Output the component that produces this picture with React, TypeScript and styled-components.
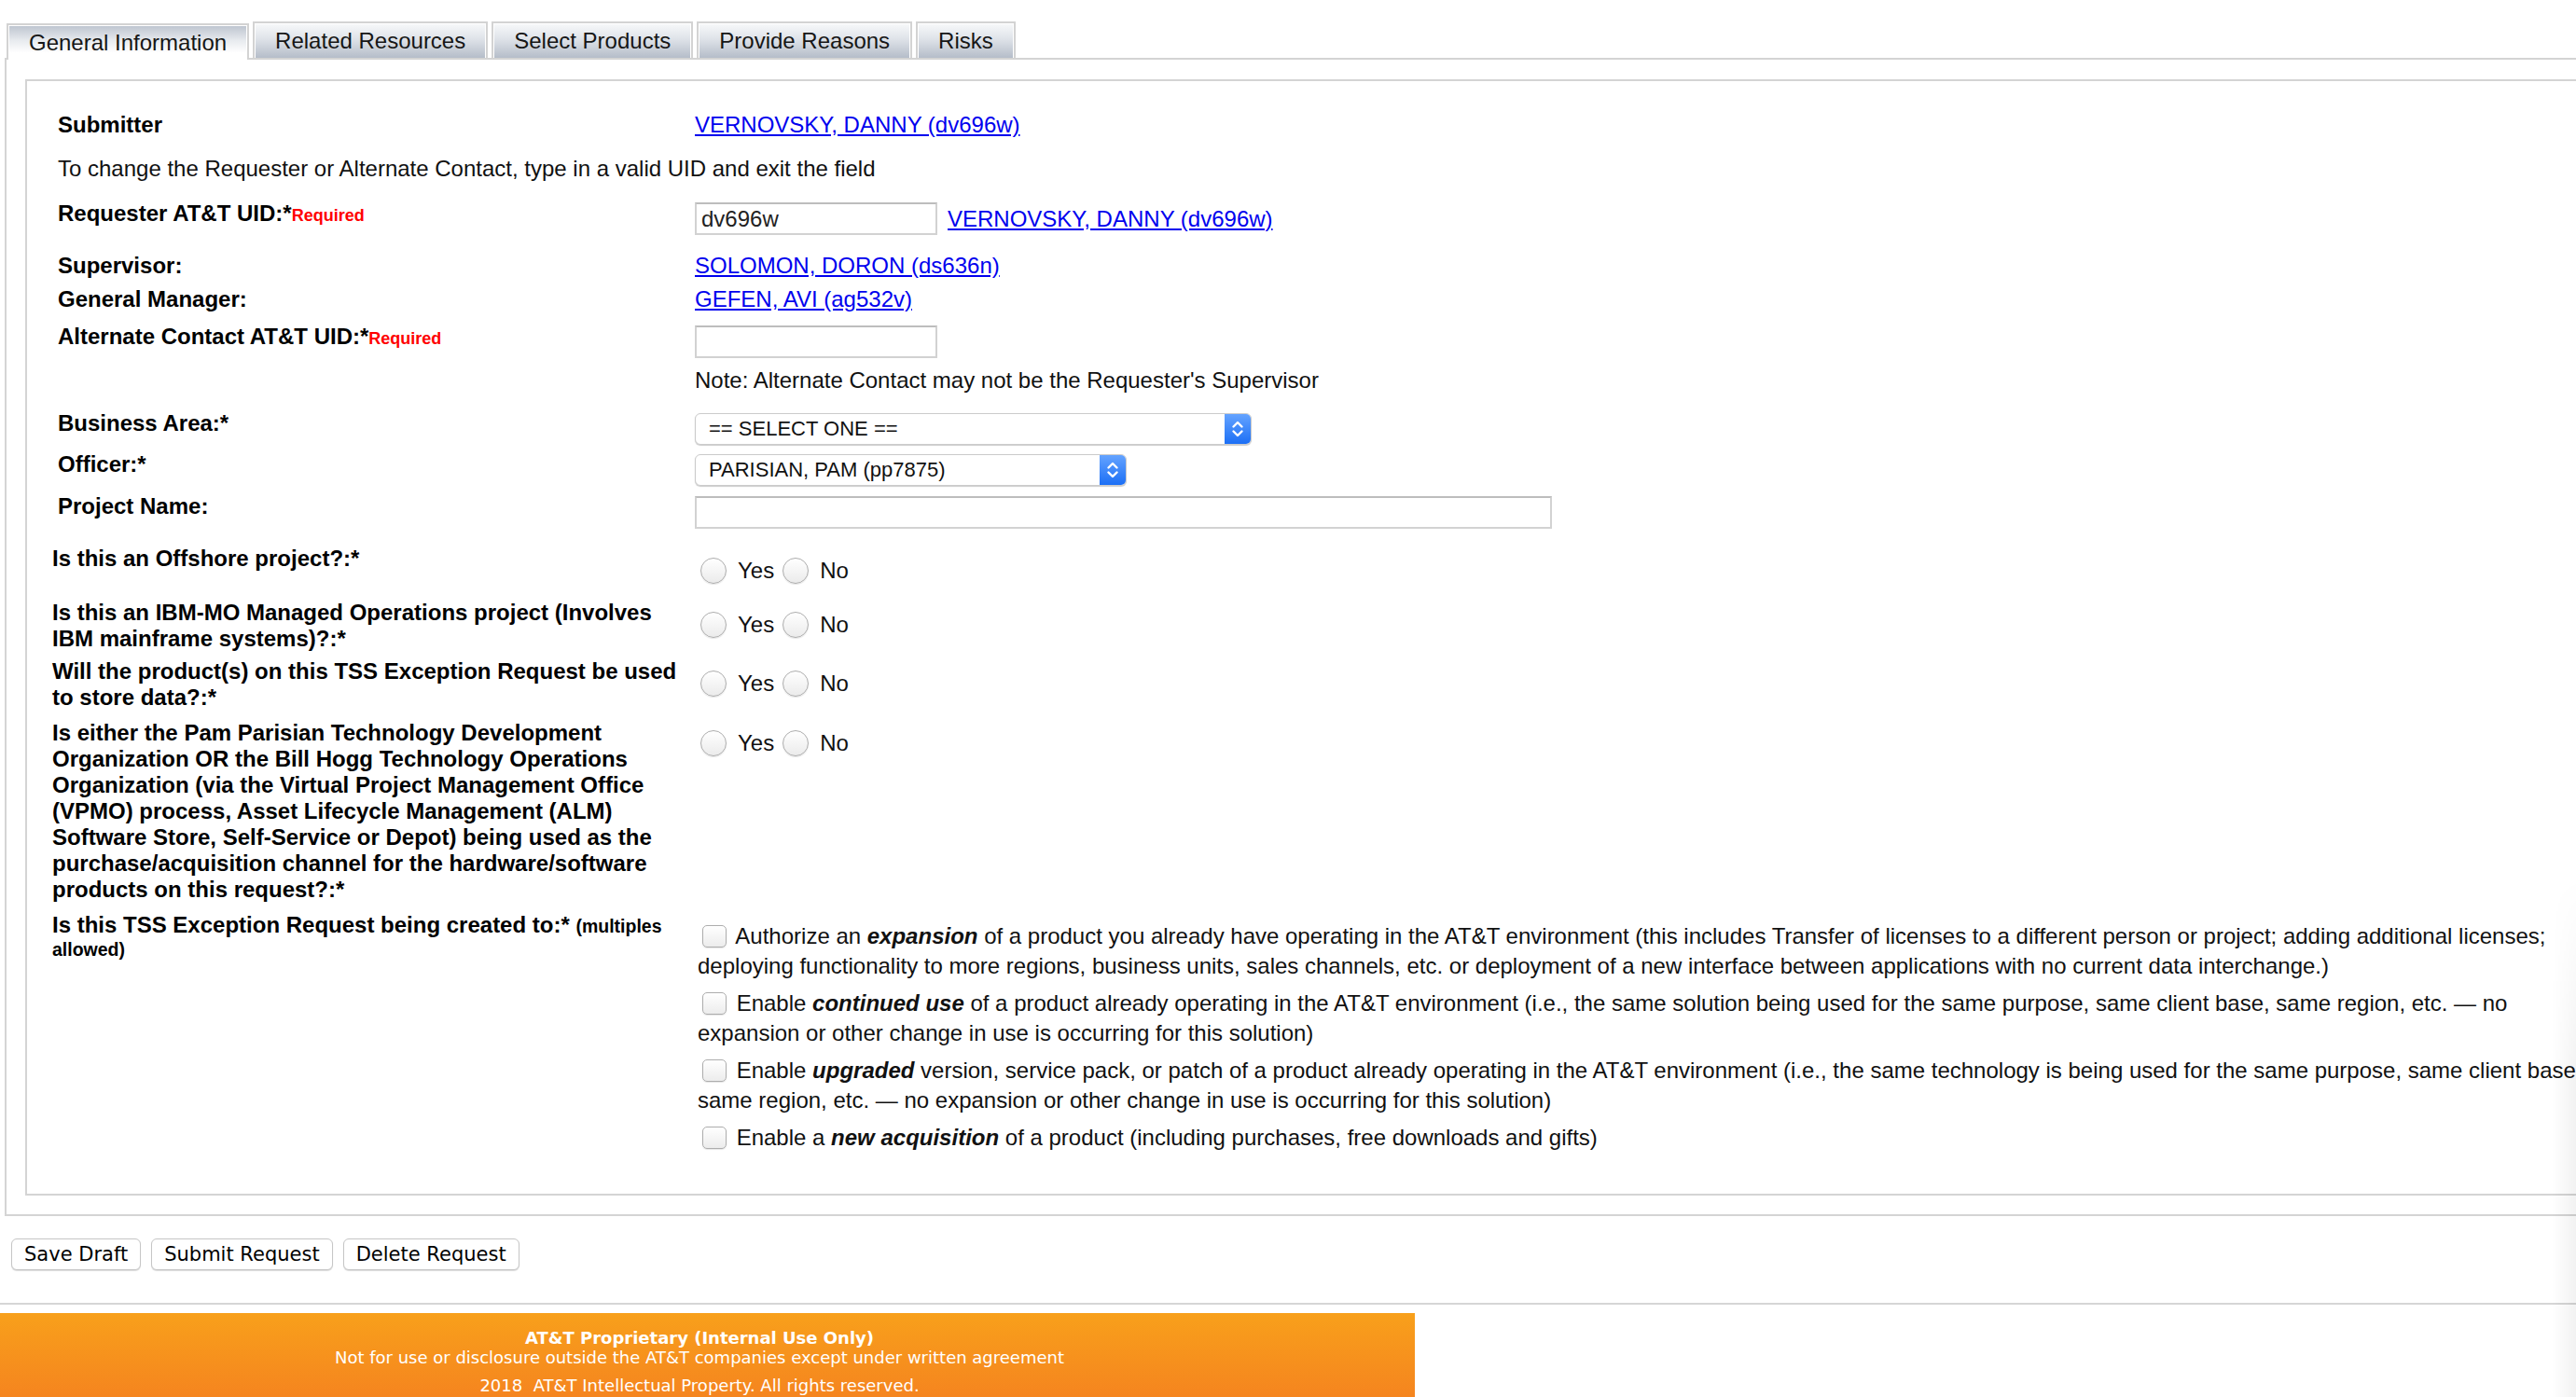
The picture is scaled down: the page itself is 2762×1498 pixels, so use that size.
import React from "react";
import styled, { createGlobalStyle } from "styled-components";

const GlobalStyle = createGlobalStyle`
  html, body {
    margin: 0;
    padding: 0;
    background: #ffffff;
    overflow: hidden;
  }
  body {
    font-family: "Liberation Sans", Arial, Helvetica, sans-serif;
    color: #000000;
  }
`;

const Page = styled.div`
  width: 2860px;
  padding-top: 23px;
  font-size: 24px;
  line-height: 28px;
`;

const TabBar = styled.div`
  display: flex;
  align-items: flex-end;
  gap: 4px;
  height: 41px;
  margin-left: 7px;
  margin-bottom: -2px;
  position: relative;
  z-index: 1;
`;

const Tab = styled.div<{ $active?: boolean }>`
  box-sizing: border-box;
  height: 39px;
  padding: 0 22px;
  display: flex;
  align-items: center;
  border: 2px solid #d3d3d3;
  border-bottom: none;
  margin-bottom: ${(p) => (p.$active ? 0 : 2)}px;
  font-size: 24px;
  color: #161616;
  background: ${(p) =>
    p.$active
      ? "linear-gradient(#bcc3ce 0%, #e8ebef 45%, #ffffff 80%)"
      : "linear-gradient(#f8f9fa 0%, #dfe3e9 45%, #b5bdc9 100%)"};
  box-shadow: inset 1px 1px 0 #ffffff, inset -1px 0 0 #ffffff;
  cursor: default;
`;

const Panel = styled.div`
  margin-left: 5px;
  border: 2px solid #d4d4d4;
  padding: 21px 0 20px 20px;
`;

const InnerBox = styled.div`
  border: 2px solid #d4d4d4;
  padding-bottom: 44px;
`;

const Section = styled.div<{ $pl: number }>`
  padding-left: ${(p) => p.$pl}px;
`;

const Row = styled.div<{ $mt: number; $cols: string }>`
  display: grid;
  grid-template-columns: ${(p) => p.$cols};
  margin-top: ${(p) => p.$mt}px;
`;

const Label = styled.div<{ $tight?: boolean }>`
  font-weight: bold;
  line-height: ${(p) => (p.$tight ? 24 : 28)}px;
  padding-top: ${(p) => (p.$tight ? 2 : 0)}px;
  padding-right: 12px;
  color: #000;
`;

const Required = styled.span`
  color: #ff0000;
  font-size: 18px;
  font-weight: bold;
`;

const Small = styled.span`
  font-size: 19.5px;
  font-weight: bold;
`;

const FullText = styled.div`
  grid-column: 1 / -1;
  color: #111;
`;

const Value = styled.div<{ $pt?: number; $col?: number }>`
  display: flex;
  align-items: center;
  gap: 11px;
  padding-top: ${(p) => p.$pt ?? 0}px;
  grid-column: ${(p) => p.$col ?? 2};
  align-self: start;
  color: #111;
`;

const Link = styled.a`
  color: #0000ee;
  text-decoration: underline;
  font-size: 24px;
  line-height: 28px;
`;

const TextInput = styled.input<{ $w: number }>`
  box-sizing: border-box;
  width: ${(p) => p.$w}px;
  height: 35px;
  margin: 0;
  padding: 0 5px;
  border: 2px solid #d2d2d2;
  border-top-color: #bdbdbd;
  font-family: "Liberation Sans", Arial, sans-serif;
  font-size: 24px;
  color: #222;
  background: #fff;
  outline: none;
`;

const SelectBox = styled.div<{ $w: number }>`
  box-sizing: border-box;
  width: ${(p) => p.$w}px;
  height: 34px;
  display: flex;
  align-items: stretch;
  border: 1px solid #cbcbcb;
  border-radius: 6px;
  box-shadow: 0 1px 1px rgba(0, 0, 0, 0.2);
  background: #ffffff;
  overflow: hidden;
  font-size: 22px;
  color: #111;
`;

const SelectText = styled.span`
  flex: 1;
  display: flex;
  align-items: center;
  padding-left: 14px;
`;

const Stepper = styled.span`
  width: 28px;
  display: flex;
  align-items: center;
  justify-content: center;
  background: linear-gradient(#64a3ff, #1c6ff5);
`;

const RadioGroup = styled.div`
  display: flex;
  align-items: center;
  height: 28px;
  margin-left: 3px;
`;

const Radio = styled.input.attrs({ type: "radio" })`
  appearance: none;
  -webkit-appearance: none;
  box-sizing: border-box;
  width: 28px;
  height: 28px;
  margin: 0 12px 0 0;
  border-radius: 50%;
  border: 1px solid #adadad;
  background: linear-gradient(#ffffff, #ebebeb);
  box-shadow: 0 1px 1px rgba(0, 0, 0, 0.1);
`;

const RadioText = styled.span`
  margin-right: 9px;
  color: #111;
`;

const CheckList = styled.div<{ $pt: number }>`
  grid-column: 2;
  padding-top: ${(p) => p.$pt}px;
  display: flex;
  flex-direction: column;
  gap: 8px;
  color: #111;
`;

const CheckItem = styled.div`
  line-height: 32px;
`;

const Checkbox = styled.input.attrs({ type: "checkbox" })`
  appearance: none;
  -webkit-appearance: none;
  box-sizing: border-box;
  width: 26px;
  height: 24px;
  margin: 0 4px 0 5px;
  vertical-align: -4px;
  border-radius: 5px;
  border: 1px solid #adadad;
  background: linear-gradient(#ffffff, #ececec);
  box-shadow: 0 1px 1px rgba(0, 0, 0, 0.1);
`;

const Emph = styled.span`
  font-weight: bold;
  font-style: italic;
`;

const ButtonRow = styled.div`
  display: flex;
  gap: 11px;
  margin: 24px 0 0 12px;
`;

const Button = styled.button`
  box-sizing: border-box;
  height: 34px;
  padding: 0 13px;
  border: 1px solid #c6c6c6;
  border-radius: 6px;
  background: #ffffff;
  box-shadow: 0 1px 1px rgba(0, 0, 0, 0.15);
  font-family: "DejaVu Sans", Verdana, sans-serif;
  font-size: 21px;
  color: #000;
`;

const Divider = styled.div`
  margin-top: 35px;
  height: 2px;
  background: #d6d6d6;
`;

const Footer = styled.footer`
  margin-top: 9px;
  width: 1517px;
  box-sizing: border-box;
  padding: 16px 17px 30px 0;
  background: linear-gradient(#f8a01b, #f47c20);
  color: #ffffff;
  text-align: center;
  font-family: "DejaVu Sans", Verdana, sans-serif;
  font-size: 18px;
  line-height: 21px;
`;

const FooterTitle = styled.div`
  font-weight: bold;
`;

const FooterLine = styled.div<{ $mt?: number }>`
  margin-top: ${(p) => p.$mt ?? 0}px;
`;

const EdgeShade = styled.div`
  position: fixed;
  top: 940px;
  right: 0;
  bottom: 0;
  width: 26px;
  pointer-events: none;
  background: linear-gradient(to right, rgba(0, 0, 0, 0), rgba(0, 0, 0, 0.05));
  -webkit-mask-image: linear-gradient(rgba(0, 0, 0, 0), #000 40%);
  mask-image: linear-gradient(rgba(0, 0, 0, 0), #000 40%);
`;

const Chevrons = () => (
  <svg width="14" height="22" viewBox="0 0 14 22" fill="none">
    <path d="M2.5 8.5 L7 4 L11.5 8.5" stroke="#fff" strokeWidth="2.4" strokeLinecap="round" strokeLinejoin="round" />
    <path d="M2.5 13.5 L7 18 L11.5 13.5" stroke="#fff" strokeWidth="2.4" strokeLinecap="round" strokeLinejoin="round" />
  </svg>
);

const Select = ({ w, text }: { w: number; text: string }) => (
  <SelectBox $w={w}>
    <SelectText>{text}</SelectText>
    <Stepper>
      <Chevrons />
    </Stepper>
  </SelectBox>
);

const YesNo = ({ name }: { name: string }) => (
  <RadioGroup>
    <Radio name={name} />
    <RadioText>Yes</RadioText>
    <Radio name={name} />
    <RadioText>No</RadioText>
  </RadioGroup>
);

const tabs = ["General Information", "Related Resources", "Select Products", "Provide Reasons", "Risks"];

const C1 = "683px 1fr";
const C2 = "692px 2042px";

export default function App() {
  return (
    <>
      <GlobalStyle />
      <Page>
        <TabBar>
          {tabs.map((t, i) => (
            <Tab key={t} $active={i === 0}>
              {t}
            </Tab>
          ))}
        </TabBar>
        <Panel>
          <InnerBox>
            <Section $pl={33}>
              <Row $mt={33} $cols={C1}>
                <Label>Submitter</Label>
                <Value>
                  <Link href="#">VERNOVSKY, DANNY (dv696w)</Link>
                </Value>
              </Row>
              <Row $mt={19} $cols={C1}>
                <FullText>To change the Requester or Alternate Contact, type in a valid UID and exit the field</FullText>
              </Row>
              <Row $mt={20} $cols={C1}>
                <Label>
                  Requester AT&amp;T UID:*<Required>Required</Required>
                </Label>
                <Value $pt={2}>
                  <TextInput $w={260} defaultValue="dv696w" />
                  <Link href="#">VERNOVSKY, DANNY (dv696w)</Link>
                </Value>
              </Row>
              <Row $mt={19} $cols={C1}>
                <Label>Supervisor:</Label>
                <Value>
                  <Link href="#">SOLOMON, DORON (ds636n)</Link>
                </Value>
              </Row>
              <Row $mt={8} $cols={C1}>
                <Label>General Manager:</Label>
                <Value>
                  <Link href="#">GEFEN, AVI (ag532v)</Link>
                </Value>
              </Row>
              <Row $mt={12} $cols={C1}>
                <Label>
                  Alternate Contact AT&amp;T UID:*<Required>Required</Required>
                </Label>
                <Value $pt={2}>
                  <TextInput $w={260} defaultValue="" />
                </Value>
              </Row>
              <Row $mt={10} $cols={C1}>
                <Value>Note: Alternate Contact may not be the Requester's Supervisor</Value>
              </Row>
              <Row $mt={18} $cols={C1}>
                <Label>Business Area:*</Label>
                <Value $pt={3}>
                  <Select w={597} text="== SELECT ONE ==" />
                </Value>
              </Row>
              <Row $mt={7} $cols={C1}>
                <Label>Officer:*</Label>
                <Value $pt={3}>
                  <Select w={463} text="PARISIAN, PAM (pp7875)" />
                </Value>
              </Row>
              <Row $mt={8} $cols={C1}>
                <Label>Project Name:</Label>
                <Value $pt={3}>
                  <TextInput $w={919} defaultValue="" />
                </Value>
              </Row>
            </Section>
            <Section $pl={27}>
              <Row $mt={18} $cols={C2}>
                <Label>Is this an Offshore project?:*</Label>
                <Value $pt={13}>
                  <YesNo name="offshore" />
                </Value>
              </Row>
              <Row $mt={17} $cols={C2}>
                <Label>Is this an IBM-MO Managed Operations project (Involves IBM mainframe systems)?:*</Label>
                <Value $pt={13}>
                  <YesNo name="ibmmo" />
                </Value>
              </Row>
              <Row $mt={7} $cols={C2}>
                <Label>Will the product(s) on this TSS Exception Request be used to store data?:*</Label>
                <Value $pt={13}>
                  <YesNo name="storedata" />
                </Value>
              </Row>
              <Row $mt={10} $cols={C2}>
                <Label>
                  Is either the Pam Parisian Technology Development Organization OR the Bill Hogg Technology Operations
                  Organization (via the Virtual Project Management Office (VPMO) process, Asset Lifecycle Management (ALM)
                  Software Store, Self-Service or Depot) being used as the purchase/acquisition channel for the
                  hardware/software products on this request?:*
                </Label>
                <Value $pt={11}>
                  <YesNo name="channel" />
                </Value>
              </Row>
              <Row $mt={10} $cols={C2}>
                <Label $tight>
                  Is this TSS Exception Request being created to:* <Small>(multiples allowed)</Small>
                </Label>
                <CheckList $pt={10}>
                  <CheckItem>
                    <Checkbox /> Authorize an <Emph>expansion</Emph> of a product you already have operating in the
                    AT&amp;T environment (this includes Transfer of licenses to a different person or project; adding
                    additional licenses; deploying functionality to more regions, business units, sales channels, etc. or
                    deployment of a new interface between applications with no current data interchange.)
                  </CheckItem>
                  <CheckItem>
                    <Checkbox /> Enable <Emph>continued use</Emph> of a product already operating in the AT&amp;T
                    environment (i.e., the same solution being used for the same purpose, same client base, same region,
                    etc. — no expansion or other change in use is occurring for this solution)
                  </CheckItem>
                  <CheckItem>
                    <Checkbox /> Enable <Emph>upgraded</Emph> version, service pack, or patch of a product already
                    operating in the AT&amp;T environment (i.e., the same technology is being used for the same purpose,
                    same client base, same region, etc. — no expansion or other change in use is occurring for this
                    solution)
                  </CheckItem>
                  <CheckItem>
                    <Checkbox /> Enable a <Emph>new acquisition</Emph> of a product (including purchases, free downloads
                    and gifts)
                  </CheckItem>
                </CheckList>
              </Row>
            </Section>
          </InnerBox>
        </Panel>
        <ButtonRow>
          <Button>Save Draft</Button>
          <Button>Submit Request</Button>
          <Button>Delete Request</Button>
        </ButtonRow>
        <Divider />
        <Footer>
          <FooterTitle>AT&amp;T Proprietary (Internal Use Only)</FooterTitle>
          <FooterLine>Not for use or disclosure outside the AT&amp;T companies except under written agreement</FooterLine>
          <FooterLine $mt={9}>2018&nbsp; AT&amp;T Intellectual Property. All rights reserved.</FooterLine>
        </Footer>
      </Page>
      <EdgeShade />
    </>
  );
}
